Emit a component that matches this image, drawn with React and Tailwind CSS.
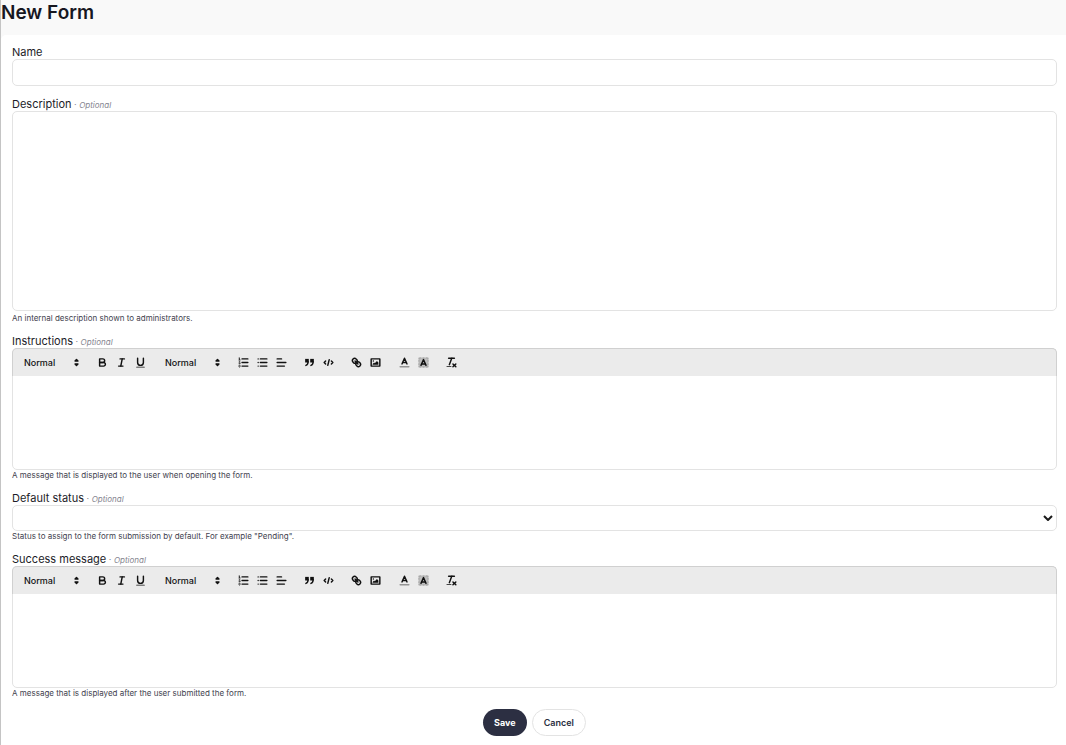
import { useState } from "react";

const stroke = {
  fill: "none",
  stroke: "currentColor",
  strokeWidth: 2,
  strokeLinecap: "round",
  strokeLinejoin: "round",
};
const thin = { ...stroke, strokeWidth: 1 };

const icons = {
  bold: (
    <g {...stroke}>
      <path d="M5,4H9.5A2.5,2.5,0,0,1,12,6.5v0A2.5,2.5,0,0,1,9.5,9H5V4Z" />
      <path d="M5,9h5.5A2.5,2.5,0,0,1,13,11.5v0A2.5,2.5,0,0,1,10.5,14H5V9Z" />
    </g>
  ),
  italic: (
    <g {...stroke}>
      <line x1="7" x2="13" y1="4" y2="4" />
      <line x1="5" x2="11" y1="14" y2="14" />
      <line x1="8" x2="10" y1="14" y2="4" />
    </g>
  ),
  underline: (
    <>
      <path
        {...stroke}
        d="M5,3V9a4.012,4.012,0,0,0,4,4H9a4.012,4.012,0,0,0,4-4V3"
      />
      <rect fill="currentColor" height="1" rx="0.5" width="12" x="3" y="15" />
    </>
  ),
  ordered: (
    <>
      <g {...stroke}>
        <line x1="7" x2="15" y1="4" y2="4" />
        <line x1="7" x2="15" y1="9" y2="9" />
        <line x1="7" x2="15" y1="14" y2="14" />
      </g>
      <g {...thin}>
        <line x1="2.5" x2="4.5" y1="5.5" y2="5.5" />
        <path d="M4.5,10.5h-2c0-0.234,1.85-1.076,1.85-2.234A0.959,0.959,0,0,0,2.5,8.156" />
        <path d="M2.5,14.846a0.959,0.959,0,0,0,1.85-.109A0.7,0.7,0,0,0,3.75,14a0.688,0.688,0,0,0,.6-0.736,0.959,0.959,0,0,0-1.85-.109" />
      </g>
      <path
        fill="currentColor"
        d="M3.5,6A0.5,0.5,0,0,1,3,5.5V3.085l-0.276.138A0.5,0.5,0,0,1,2.053,3c-0.124-.247-0.023-0.324.224-0.447l1-.5A0.5,0.5,0,0,1,4,2.5v3A0.5,0.5,0,0,1,3.5,6Z"
      />
    </>
  ),
  bullet: (
    <g {...stroke}>
      <line x1="6" x2="15" y1="4" y2="4" />
      <line x1="6" x2="15" y1="9" y2="9" />
      <line x1="6" x2="15" y1="14" y2="14" />
      <line x1="3" x2="3" y1="4" y2="4" />
      <line x1="3" x2="3" y1="9" y2="9" />
      <line x1="3" x2="3" y1="14" y2="14" />
    </g>
  ),
  align: (
    <g {...stroke}>
      <line x1="3" x2="15" y1="9" y2="9" />
      <line x1="3" x2="13" y1="14" y2="14" />
      <line x1="3" x2="9" y1="4" y2="4" />
    </g>
  ),
  blockquote: (
    <g fill="currentColor" stroke="currentColor" strokeWidth="2">
      <rect height="3" width="3" x="4" y="5" />
      <rect height="3" width="3" x="11" y="5" />
      <path d="M7,8c0,4.031-3,5-3,5" fill="none" strokeLinecap="round" />
      <path d="M14,8c0,4.031-3,5-3,5" fill="none" strokeLinecap="round" />
    </g>
  ),
  code: (
    <g {...stroke}>
      <polyline points="5 7 3 9 5 11" />
      <polyline points="13 7 15 9 13 11" />
      <line x1="10" x2="8" y1="5" y2="13" />
    </g>
  ),
  link: (
    <g {...stroke}>
      <line x1="7" x2="11" y1="7" y2="11" />
      <path d="M8.9,4.577a3.476,3.476,0,0,1,.36,4.679A3.476,3.476,0,0,1,4.577,8.9C3.185,7.5,2.035,6.4,4.217,4.217S7.5,3.185,8.9,4.577Z" />
      <path d="M13.423,9.1a3.476,3.476,0,0,0-4.679-.36,3.476,3.476,0,0,0,.36,4.679c1.392,1.392,2.5,2.542,4.679.36S14.815,10.5,13.423,9.1Z" />
    </g>
  ),
  image: (
    <>
      <rect {...stroke} height="10" width="12" x="3" y="4" />
      <circle fill="currentColor" cx="6" cy="7" r="1" />
      <polyline
        fill="currentColor"
        points="5 12 5 11 7 9 8 10 11 7 13 9 13 12 5 12"
      />
    </>
  ),
  color: (
    <g {...stroke}>
      <line strokeOpacity="0.4" x1="3" x2="15" y1="15" y2="15" />
      <polyline points="5.5 11 9 3 12.5 11" />
      <line x1="11.63" x2="6.38" y1="9" y2="9" />
    </g>
  ),
  background: (
    <>
      <rect
        x="2.5"
        y="2.5"
        width="13"
        height="13"
        fill="currentColor"
        fillOpacity="0.2"
        stroke="currentColor"
        strokeOpacity="0.5"
        strokeDasharray="1 1"
      />
      <g {...stroke}>
        <polyline points="5.5 13 9 5 12.5 13" />
        <line x1="11.63" x2="6.38" y1="11" y2="11" />
      </g>
    </>
  ),
  clean: (
    <>
      <g {...stroke}>
        <line x1="5" x2="13" y1="3" y2="3" />
        <line x1="6" x2="9.35" y1="12" y2="3" />
        <line x1="11" x2="15" y1="11" y2="15" />
        <line x1="15" x2="11" y1="11" y2="15" />
      </g>
      <rect fill="currentColor" height="1" rx="0.5" width="7" x="2" y="14" />
    </>
  ),
};

function ToolButton({ name }) {
  return (
    <button
      type="button"
      aria-label={name}
      className="flex h-[15px] w-[19px] items-center justify-center text-[#111]"
    >
      <svg viewBox="0 0 18 18" className="size-[13px]">
        {icons[name]}
      </svg>
    </button>
  );
}

function Picker({ label, options }) {
  return (
    <div className="relative flex w-[66px] items-center">
      <select
        aria-label={label}
        className="w-full appearance-none bg-transparent pl-1.5 text-[9px] leading-4 font-medium text-[#111] outline-none"
      >
        {options.map((option) => (
          <option key={option}>{option}</option>
        ))}
      </select>
      <svg
        viewBox="0 0 18 18"
        className="pointer-events-none absolute right-px size-[13px] text-[#111]"
      >
        <g
          fill="currentColor"
          stroke="currentColor"
          strokeWidth="2"
          strokeLinejoin="round"
        >
          <polygon points="7 11 9 13 11 11 7 11" />
          <polygon points="7 7 9 5 11 7 7 7" />
        </g>
      </svg>
    </div>
  );
}

function Editor({ id }) {
  return (
    <div className="rounded-[5px] border border-[#e3e3e3]">
      <div className="-mx-px -mt-px flex h-7 items-center gap-[9px] rounded-t-[5px] border border-b-0 border-[#d0d0d0] bg-[#ebebeb] pl-[5px]">
        <Picker label="Heading" options={["Normal", "Heading 1", "Heading 2"]} />
        <div className="flex">
          <ToolButton name="bold" />
          <ToolButton name="italic" />
          <ToolButton name="underline" />
        </div>
        <Picker label="Size" options={["Normal", "Small", "Large", "Huge"]} />
        <div className="flex">
          <ToolButton name="ordered" />
          <ToolButton name="bullet" />
          <ToolButton name="align" />
        </div>
        <div className="flex">
          <ToolButton name="blockquote" />
          <ToolButton name="code" />
        </div>
        <div className="flex">
          <ToolButton name="link" />
          <ToolButton name="image" />
        </div>
        <div className="flex pl-px">
          <ToolButton name="color" />
          <ToolButton name="background" />
        </div>
        <ToolButton name="clean" />
      </div>
      <div
        id={id}
        role="textbox"
        aria-multiline="true"
        aria-labelledby={`${id}-label`}
        contentEditable
        suppressContentEditableWarning
        className="min-h-[93px] px-3 py-2 text-[11px] outline-none"
      />
    </div>
  );
}

function Field({ id, label, optional, hint, children }) {
  return (
    <div>
      <label
        id={`${id}-label`}
        htmlFor={id}
        className="block text-[11px] leading-[14px] text-[#1c1c28]"
      >
        {label}
        {optional && (
          <span className="text-[9px] leading-none text-[#85858f]">
            {" · "}
            <em className="text-[8px]">Optional</em>
          </span>
        )}
      </label>
      {children}
      {hint && (
        <p className="text-[8px] leading-[10px] text-[#42424e]">{hint}</p>
      )}
    </div>
  );
}

export default function App() {
  const [name, setName] = useState("");
  const [description, setDescription] = useState("");
  const [status, setStatus] = useState("");

  return (
    <div className="min-h-screen border-l border-[#c4c4c4] bg-[#f9f9f9] font-['Inter',sans-serif]">
      <header className="h-[35px]">
        <h1 className="text-[19px] leading-[25px] font-semibold text-[#17171f]">
          New Form
        </h1>
      </header>

      <form
        onSubmit={(e) => e.preventDefault()}
        className="flex min-h-[calc(100vh-35px)] flex-col gap-[11px] rounded-tl-[5px] bg-white pt-2.5 pr-[9px] pb-2 pl-[11px]"
      >
        <Field id="name" label="Name">
          <input
            id="name"
            type="text"
            value={name}
            onChange={(e) => setName(e.target.value)}
            className="block h-[27px] w-full rounded-[5px] border border-[#e3e3e3] bg-white px-2 text-[11px] outline-none"
          />
        </Field>

        <Field
          id="description"
          label="Description"
          optional
          hint="An internal description shown to administrators."
        >
          <textarea
            id="description"
            value={description}
            onChange={(e) => setDescription(e.target.value)}
            className="mb-0.5 block h-[200px] w-full resize-none rounded-[5px] border border-[#e3e3e3] bg-white p-2 text-[11px] outline-none"
          />
        </Field>

        <Field
          id="instructions"
          label="Instructions"
          optional
          hint="A message that is displayed to the user when opening the form."
        >
          <Editor id="instructions" />
        </Field>

        <Field
          id="status"
          label="Default status"
          optional
          hint={'Status to assign to the form submission by default. For example "Pending".'}
        >
          <div className="relative">
            <select
              id="status"
              value={status}
              onChange={(e) => setStatus(e.target.value)}
              className="block h-[26px] w-full appearance-none rounded-[5px] border border-[#e3e3e3] bg-white px-2 text-[11px] outline-none"
            >
              <option value=""></option>
              <option value="pending">Pending</option>
            </select>
            <svg
              viewBox="0 0 10 8"
              className="pointer-events-none absolute top-[9px] right-1 h-2 w-2.5 text-[#1a1a1a]"
            >
              <path d="M1 2 5 6 9 2" {...stroke} strokeLinecap="butt" />
            </svg>
          </div>
        </Field>

        <Field
          id="success"
          label="Success message"
          optional
          hint="A message that is displayed after the user submitted the form."
        >
          <Editor id="success" />
        </Field>

        <div className="flex justify-center gap-[5px]">
          <button
            type="submit"
            className="h-[27px] rounded-full bg-[#2c2f42] px-[11px] text-[9px] font-bold text-white"
          >
            Save
          </button>
          <button
            type="button"
            className="h-[27px] rounded-full border border-[#e3e3e3] bg-white px-[11px] text-[9px] font-semibold text-[#2c2f42]"
          >
            Cancel
          </button>
        </div>
      </form>
    </div>
  );
}
